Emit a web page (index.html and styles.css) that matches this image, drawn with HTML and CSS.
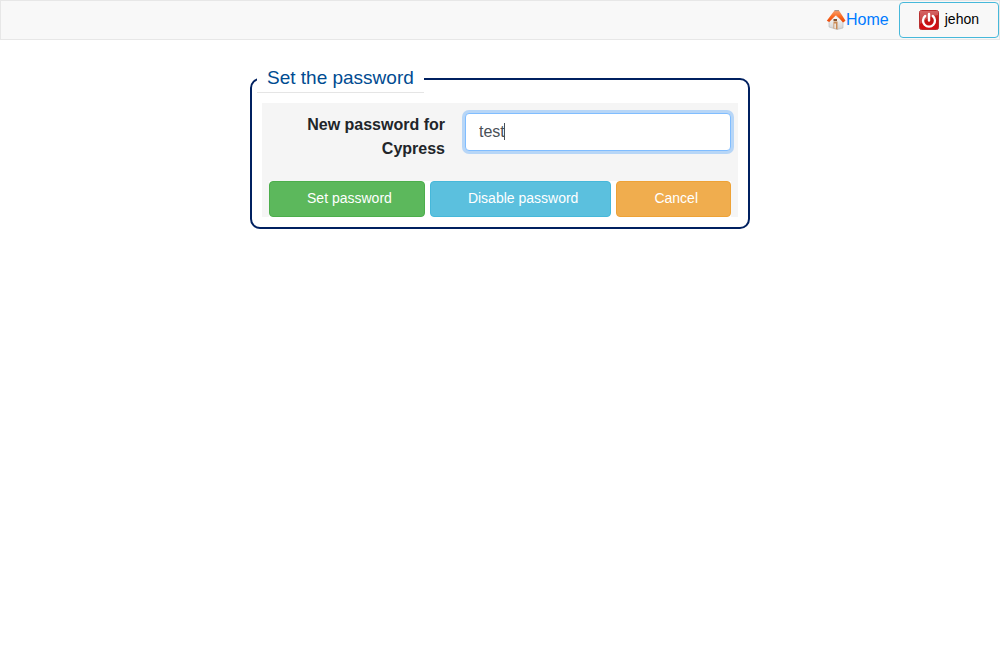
FILE: index.html
```html
<!DOCTYPE html>
<html lang="en">
<head>
<meta charset="utf-8">
<title>Set the password</title>
<link rel="stylesheet" href="styles.css">
</head>
<body>
<nav class="navbar">
  <a class="home" href="#"><svg class="icon" viewBox="0 0 20 20" aria-hidden="true">
    <defs>
      <linearGradient id="roof" x1="0" y1="0" x2="0" y2="1"><stop offset="0" stop-color="#f5a070"/><stop offset=".5" stop-color="#fb6a20"/><stop offset="1" stop-color="#e84408"/></linearGradient>
      <linearGradient id="wall" x1="0" y1="0" x2="0" y2="1"><stop offset="0" stop-color="#ffffff"/><stop offset="1" stop-color="#d2d2d2"/></linearGradient>
    </defs>
    <path d="M3 11 9 5l8 6v7l-6 1.500-8-2.500z" fill="url(#wall)" stroke="#b5b5b5" stroke-width=".6"/>
    <path d="M7.500 11.500h4v8l-4-1.200z" fill="#c98a55"/>
    <path d="M8.300 13.500h1.600v5.200l-1.600-.500z" fill="#ececec"/>
    <path d="M7.500 9h3.500v2H7.500z" fill="#80502e"/>
    <path d="M8.500.6h4.500l6.500 10.200-2.500 1.700-3.500-4-3.600-3.200L3.200 12 .8 10.700z" fill="url(#roof)"/>
    <path d="M8.500.6h4.500" stroke="#8e8078" stroke-width=".8"/>
  </svg><span>Home</span></a>
  <button class="user" type="button"><svg class="icon" viewBox="0 0 20 20" aria-hidden="true">
    <defs><linearGradient id="red" x1="0" y1="0" x2="0" y2="1"><stop offset="0" stop-color="#c93c3c"/><stop offset=".5" stop-color="#bd1515"/><stop offset="1" stop-color="#d90c14"/></linearGradient></defs>
    <rect x=".5" y=".5" width="19" height="19" rx="2" fill="url(#red)" stroke="#b83030"/>
    <path d="M1 1h18v4Q10 6 1 14z" fill="#fff" opacity=".22"/>
    <path d="M6.200 6a6 6 0 1 0 7.600 0" fill="none" stroke="#fff" stroke-width="2.300" stroke-linecap="round"/>
    <path d="M10 4v6.500" stroke="#fff" stroke-width="2.400" stroke-linecap="round"/>
  </svg><span>jehon</span></button>
</nav>
<main class="content">
  <form>
    <fieldset class="box">
      <legend class="title">Set the password</legend>
      <div class="panel">
        <div class="field">
          <label class="label" for="password">New password for Cypress</label>
          <div class="control">
            <input class="input" id="password" type="text" value="test" autocomplete="off" autofocus>
            <span class="caret"></span>
          </div>
        </div>
        <div class="actions">
          <button class="btn success" type="button">Set password</button>
          <button class="btn info" type="button">Disable password</button>
          <button class="btn warning" type="button">Cancel</button>
        </div>
      </div>
    </fieldset>
  </form>
</main>
<script src="script.js"></script>
</body>
</html>
```
FILE: styles.css
```css
* { box-sizing: border-box; }
body {
  margin: 0;
  background: #fff;
  color: #212529;
  font: 16px/24px "Liberation Sans", Arial, sans-serif;
}
button, input { font-family: inherit; }
.navbar {
  display: flex;
  justify-content: flex-end;
  align-items: center;
  gap: 10px;
  padding: 1px 0;
  background: #f8f8f8;
  border: 1px solid #e7e7e7;
}
.icon { width: 20px; height: 20px; flex: none; }
.home {
  display: flex;
  align-items: center;
  color: #007bff;
  text-decoration: none;
}
.user {
  display: flex;
  align-items: center;
  gap: 6px;
  height: 36px;
  padding: 0 19px;
  border: 1px solid #46b8da;
  border-radius: 4px;
  background: transparent;
  color: #000;
  font-size: 14px;
  line-height: 20px;
}
.user span { padding-bottom: 2px; }
.content {
  width: 50%;
  min-width: 500px;
  margin: 25px auto 0;
}
.box {
  min-width: 0;
  margin: 0;
  padding: 10px 5px;
  border: 2px solid #002060;
  border-radius: 10px;
}
.title {
  padding: 1px 10px 2px;
  border-bottom: 1px solid #e5e5e5;
  color: #004b91;
  font-size: 19px;
}
.panel {
  margin: 0 5px;
  padding: 10px 7px 0;
  background: #f5f5f5;
}
.field {
  display: grid;
  grid-template-columns: 176px 1fr;
  gap: 20px;
  align-items: start;
}
.label {
  font-weight: bold;
  text-align: right;
}
.control { position: relative; }
.input {
  display: block;
  width: 100%;
  height: 38px;
  padding: 6px 13px;
  border: 1px solid #ced4da;
  border-radius: 4px;
  background: #fff;
  color: #495057;
  font-size: 16px;
  line-height: 24px;
  caret-color: transparent;
}
.input:focus {
  border-color: #80bdff;
  outline: 0;
  box-shadow: 0 0 0 3px rgba(0, 123, 255, .25);
}
.caret {
  display: none;
  position: absolute;
  top: 10px;
  left: 39px;
  width: 1px;
  height: 17px;
  background: #495057;
}
.input:focus + .caret { display: block; }
.actions {
  display: flex;
  gap: 5px;
  margin-top: 20px;
  background: #fff;
}
.btn {
  flex: 1 1 auto;
  padding: 5px 32px 7px 37px;
  border: 1px solid;
  border-radius: 4px;
  color: #fff;
  font-size: 14px;
  line-height: 22px;
}
.success { background: #5cb85c; border-color: #4cae4c; }
.info { background: #5bc0de; border-color: #46b8da; }
.warning { background: #f0ad4e; border-color: #eea236; }
```
FILE: script.js
```js
const password = document.getElementById("password");
const caret = document.querySelector(".caret");
password.focus();
password.addEventListener("input", () => {
  caret.remove();
  password.style.caretColor = "auto";
});
```
